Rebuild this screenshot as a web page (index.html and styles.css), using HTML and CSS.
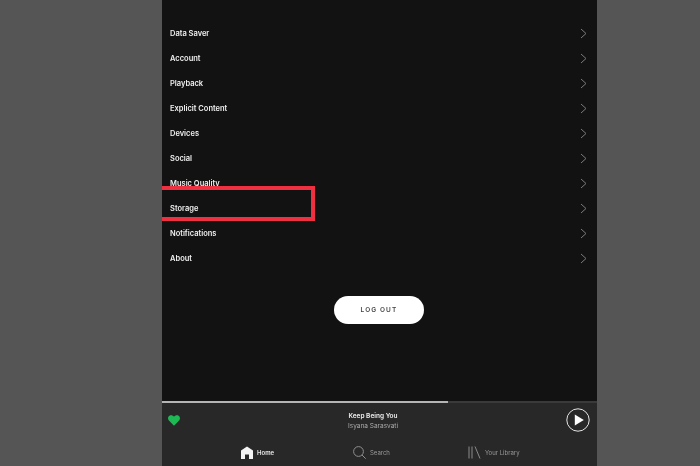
FILE: index.html
```html
<!DOCTYPE html>
<html lang="en">
<head>
<meta charset="utf-8">
<title>Settings</title>
<link rel="stylesheet" href="styles.css">
</head>
<body>
<main class="panel">
  <ul class="menu">
    <li class="row"><span>Data Saver</span><svg class="chev" viewBox="0 0 7 11"><path d="M1 1l5 4.5L1 10"/></svg></li>
    <li class="row"><span>Account</span><svg class="chev" viewBox="0 0 7 11"><path d="M1 1l5 4.5L1 10"/></svg></li>
    <li class="row"><span>Playback</span><svg class="chev" viewBox="0 0 7 11"><path d="M1 1l5 4.5L1 10"/></svg></li>
    <li class="row"><span>Explicit Content</span><svg class="chev" viewBox="0 0 7 11"><path d="M1 1l5 4.5L1 10"/></svg></li>
    <li class="row"><span>Devices</span><svg class="chev" viewBox="0 0 7 11"><path d="M1 1l5 4.5L1 10"/></svg></li>
    <li class="row"><span>Social</span><svg class="chev" viewBox="0 0 7 11"><path d="M1 1l5 4.5L1 10"/></svg></li>
    <li class="row"><span>Music Quality</span><svg class="chev" viewBox="0 0 7 11"><path d="M1 1l5 4.5L1 10"/></svg></li>
    <li class="row"><span>Storage</span><svg class="chev" viewBox="0 0 7 11"><path d="M1 1l5 4.5L1 10"/></svg></li>
    <li class="row"><span>Notifications</span><svg class="chev" viewBox="0 0 7 11"><path d="M1 1l5 4.5L1 10"/></svg></li>
    <li class="row"><span>About</span><svg class="chev" viewBox="0 0 7 11"><path d="M1 1l5 4.5L1 10"/></svg></li>
  </ul>
  <div class="highlight"></div>
  <div class="logout-wrap"><button class="logout">LOG OUT</button></div>
  <footer class="footer">
    <div class="progress"><div class="progress-fill"></div></div>
    <section class="player">
      <svg class="heart" viewBox="0 0 12 11"><path d="M6 10.800L.9 5.600C-.5 4-.1 1.600 1.400.7 3-.2 4.900.2 6 1.700 7.100.2 9-.2 10.600.7c1.500.9 1.900 3.300.5 4.900z"/></svg>
      <div class="track">
        <div class="title">Keep Being You</div>
        <div class="artist">Isyana Sarasvati</div>
      </div>
      <svg class="play" viewBox="0 0 24 24"><circle cx="12" cy="12" r="11.200"/><path d="M8.800 6.500l9 5.500-9 5.500z"/></svg>
    </section>
    <nav class="tabs">
      <div class="tab tab-home">
        <svg class="ic-home" viewBox="0 0 12 13"><path d="M6 .5L12 4.500V13H8V8.500H4V13H0V4.500z"/></svg>
        <span>Home</span>
      </div>
      <div class="tab tab-search">
        <svg class="ic-search" viewBox="0 0 13 13"><circle cx="5.500" cy="5.500" r="4.900"/><path d="M9 9l3.700 3.700"/></svg>
        <span>Search</span>
      </div>
      <div class="tab tab-lib">
        <svg class="ic-lib" viewBox="0 0 13 13"><path d="M1 .5v12M4 .5v12M7 .5l5 12"/></svg>
        <span>Your Library</span>
      </div>
    </nav>
  </footer>
</main>
</body>
</html>
```
FILE: styles.css
```css
* { box-sizing: border-box; }
html, body { margin: 0; height: 466px; overflow: hidden; }
body {
  background: #555555;
  font-family: Inter, "Liberation Sans", sans-serif;
  padding-left: 162px;
  width: 700px;
}
.panel {
  position: relative;
  width: 435px;
  height: 466px;
  background: #121212;
  display: flex;
  flex-direction: column;
  filter: blur(0.4px);
}
.menu { list-style: none; margin: 0; padding: 21px 0 0; }
.row {
  height: 25px;
  display: flex;
  align-items: center;
  justify-content: space-between;
  padding: 0 10px 0 8px;
  color: #f0f0f0;
  font-size: 7.500px;
  font-weight: 600;
}
.row span { line-height: 25px; height: 25px; }
.chev { width: 7px; height: 11px; fill: none; stroke: #7a7a7a; stroke-width: 1; }
.highlight {
  position: absolute;
  left: 0;
  top: 186px;
  width: 153px;
  height: 35px;
  border: 4.500px solid #ee3040;
  border-left: 0;
}
.logout-wrap { display: flex; justify-content: center; padding: 25px 1px 0 0; }
.logout {
  width: 90px;
  height: 28px;
  border: 0;
  border-radius: 14px;
  background: #ffffff;
  color: #444;
  font-family: Inter, "Liberation Sans", sans-serif;
  font-size: 6.500px;
  font-weight: 600;
  letter-spacing: 1.100px;
  padding: 0;
}
.footer { margin-top: auto; background: #282828; }
.progress { height: 2px; background: #3a3a3a; }
.progress-fill { width: 286px; height: 2px; background: #b5b5b5; }
.player {
  height: 34px;
  display: flex;
  align-items: center;
  justify-content: space-between;
  padding: 0 7px 0 6px;
}
.heart { width: 12px; height: 11px; fill: #1db954; }
.track { text-align: center; padding-top: 2px; }
.title { color: #ececec; font-size: 6.500px; font-weight: 600; line-height: 10px; }
.artist { color: #aaaaaa; font-size: 6.500px; line-height: 10px; }
.play { width: 24px; height: 24px; }
.play circle { fill: none; stroke: #e4e4e4; stroke-width: 1; }
.play path { fill: #ffffff; }
.tabs {
  height: 29px;
  display: flex;
  align-items: center;
  padding: 1px 0 0 79px;
}
.tab { display: flex; align-items: center; gap: 4px; color: #9a9a9a; font-size: 6px; }
.tab-home { color: #e8e8e8; font-weight: 600; width: 112px; }
.tab-search { width: 115px; }
.ic-home { width: 12px; height: 13px; fill: #f4f4f4; }
.ic-search { width: 13px; height: 13px; fill: none; stroke: #8e8e8e; stroke-width: 1; }
.ic-lib { width: 13px; height: 13px; fill: none; stroke: #8a8a8a; stroke-width: 1; }
```
